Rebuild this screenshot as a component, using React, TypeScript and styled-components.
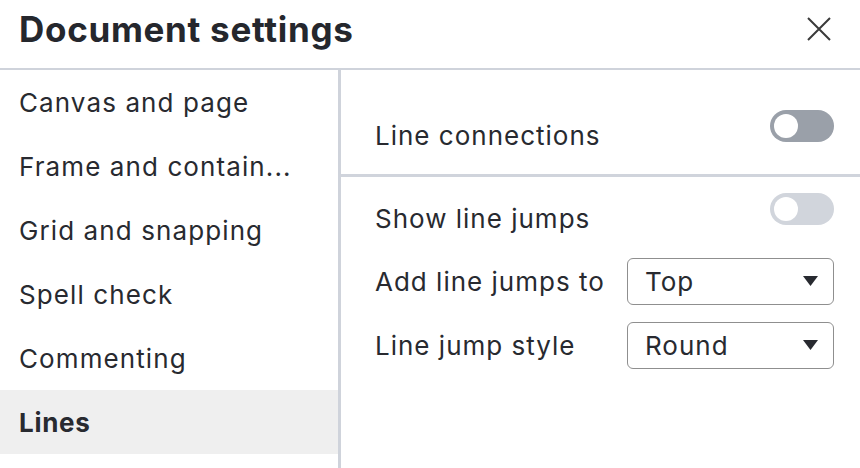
import React from "react";
import styled, { createGlobalStyle } from "styled-components";

const Global = createGlobalStyle`
  html, body { margin: 0; padding: 0; background: #fff; }
  body { font-family: Inter, "Noto Sans", sans-serif; color: #282a30; }
  * { box-sizing: border-box; }
`;

const Dialog = styled.div`
  width: 860px;
  height: 468px;
  display: flex;
  flex-direction: column;
  overflow: hidden;
  background: #fff;
`;

const Header = styled.div`
  height: 70px;
  flex: none;
  display: flex;
  align-items: flex-start;
  justify-content: space-between;
  border-bottom: 2px solid #cfd3db;
  padding: 8px 28px 0 19px;
`;

const Title = styled.h1`
  margin: 0;
  font-size: 35px;
  font-weight: 700;
  letter-spacing: 0.7px;
  line-height: 42px;
  color: #25272d;
`;

const CloseButton = styled.button`
  border: none;
  background: transparent;
  padding: 0;
  margin-top: 8px;
  width: 26px;
  height: 26px;
  display: flex;
  align-items: center;
  justify-content: center;
  cursor: pointer;
`;

const Body = styled.div`
  flex: 1;
  display: flex;
  min-height: 0;
`;

const Sidebar = styled.nav`
  width: 341px;
  flex: none;
  border-right: 3px solid #cfd3db;
  display: flex;
  flex-direction: column;
`;

const NavItem = styled.div<{ $active?: boolean }>`
  height: 64px;
  display: flex;
  align-items: center;
  padding: 0 19px;
  font-size: 26px;
  letter-spacing: ${(p) => (p.$active ? "0.7px" : "1.1px")};
  font-weight: ${(p) => (p.$active ? 700 : 400)};
  background: ${(p) => (p.$active ? "#efefef" : "transparent")};
  color: #282a30;
  white-space: nowrap;
`;

const Content = styled.div`
  flex: 1;
  display: flex;
  flex-direction: column;
`;

const Section = styled.div<{ $bordered?: boolean }>`
  padding: ${(p) => (p.$bordered ? "40px 26px 24px 34px" : "16px 26px 0 34px")};
  border-bottom: ${(p) => (p.$bordered ? "3px solid #d0d4dc" : "none")};
  display: flex;
  flex-direction: column;
  gap: 16px;
`;

const Row = styled.div`
  display: flex;
  align-items: center;
  justify-content: space-between;
  min-height: 48px;
`;

const ToggleRow = styled.div<{ $h?: number }>`
  display: flex;
  align-items: flex-start;
  justify-content: space-between;
  height: ${(p) => p.$h ?? 40}px;
`;

const Label = styled.span<{ $offset?: number }>`
  font-size: 26px;
  letter-spacing: 1px;
  color: #282a30;
  margin-top: ${(p) => p.$offset ?? 0}px;
`;

const Toggle = styled.div<{ $disabled?: boolean }>`
  width: 64px;
  height: 32px;
  border-radius: 16px;
  background: ${(p) => (p.$disabled ? "#d1d5dc" : "#9aa0a9")};
  padding: 4px;
  flex: none;
  &::after {
    content: "";
    display: block;
    width: 24px;
    height: 24px;
    border-radius: 50%;
    background: #fff;
  }
`;

const Select = styled.div`
  width: 207px;
  height: 47px;
  border: 1.5px solid #8f8f8f;
  border-radius: 6px;
  display: flex;
  align-items: center;
  justify-content: space-between;
  padding: 0 15px 0 17px;
  font-size: 26px;
  letter-spacing: 1px;
  color: #282a30;
`;

const Arrow = () => (
  <svg width="15" height="10" viewBox="0 0 15 10">
    <path d="M0 0 H15 L7.5 10 Z" fill="#282a30" />
  </svg>
);

const CloseIcon = () => (
  <svg width="26" height="24" viewBox="0 0 26 24">
    <path d="M2 1 L24 23 M24 1 L2 23" stroke="#3a3a3a" strokeWidth="2" />
  </svg>
);

const navItems = [
  "Canvas and page",
  "Frame and contain...",
  "Grid and snapping",
  "Spell check",
  "Commenting",
  "Lines",
];

export default function App() {
  return (
    <>
      <Global />
      <Dialog>
        <Header>
          <Title>Document settings</Title>
          <CloseButton aria-label="Close">
            <CloseIcon />
          </CloseButton>
        </Header>
        <Body>
          <Sidebar>
            {navItems.map((n) => (
              <NavItem key={n} $active={n === "Lines"}>
                {n}
              </NavItem>
            ))}
          </Sidebar>
          <Content>
            <Section $bordered>
              <ToggleRow>
                <Label $offset={10}>Line connections</Label>
                <Toggle />
              </ToggleRow>
            </Section>
            <Section>
              <ToggleRow $h={48}>
                <Label $offset={10}>Show line jumps</Label>
                <Toggle $disabled />
              </ToggleRow>
              <Row>
                <Label>Add line jumps to</Label>
                <Select>
                  <span>Top</span>
                  <Arrow />
                </Select>
              </Row>
              <Row>
                <Label>Line jump style</Label>
                <Select>
                  <span>Round</span>
                  <Arrow />
                </Select>
              </Row>
            </Section>
          </Content>
        </Body>
      </Dialog>
    </>
  );
}
